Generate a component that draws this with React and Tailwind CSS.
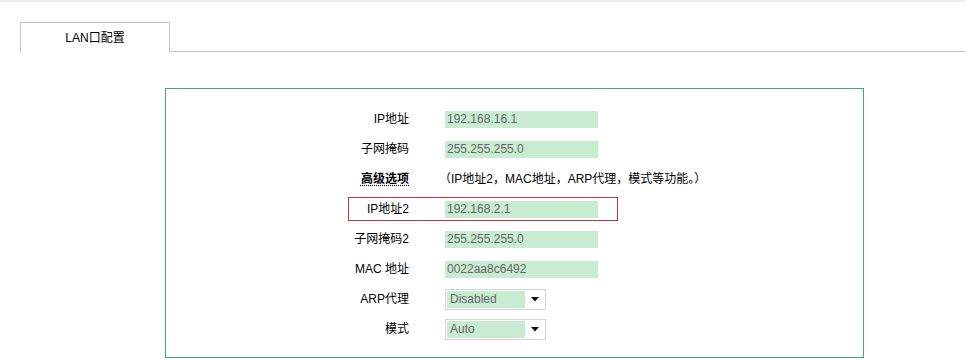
import React from 'react';

const font = { fontFamily: '"Liberation Sans", "Noto Sans CJK SC", sans-serif' };

const rows = [
  { label: 'IP地址', value: '192.168.16.1' },
  { label: '子网掩码', value: '255.255.255.0' },
  { label: '高级选项', note: '（IP地址2，MAC地址，ARP代理，模式等功能。）' },
  { label: 'IP地址2', value: '192.168.2.1', highlight: true },
  { label: '子网掩码2', value: '255.255.255.0' },
  { label: 'MAC 地址', value: '0022aa8c6492' },
  { label: 'ARP代理', select: 'Disabled' },
  { label: '模式', select: 'Auto' },
];

const Field = ({ value }) => (
  <div className="w-[153px] h-[17px] bg-[#c8ecd2] text-[#666] text-[12px] leading-[17px] pl-[2px]">
    {value}
  </div>
);

const Select = ({ value }) => (
  <div className="w-[101px] h-[21px] border border-[#d4d4d4] bg-white flex items-center pl-[1px]">
    <div className="w-[78px] h-[17px] bg-[#c8ecd2] text-[#666] text-[12px] leading-[17px] pl-[3px]">{value}</div>
    <div className="flex-1 flex justify-center">
      <svg width="8" height="5" viewBox="0 0 8 5"><path d="M0 0H8L4 4.5Z" fill="#111" /></svg>
    </div>
  </div>
);

export default function App() {
  return (
    <div className="w-[965px] h-[359px] bg-white overflow-hidden text-black" style={font}>
      <div className="h-[2px] bg-[#f0f0f0]" />
      <div className="flex items-end mt-[20px] pl-[20px]">
        <div className="w-[150px] h-[30px] border border-b-0 border-[#c4c4c4] flex items-center justify-center text-[12px]">
          LAN口配置
        </div>
        <div className="flex-1 border-b border-[#c4c4c4]" />
      </div>
      <div className="ml-[165px] mt-[36px] w-[699px] h-[270px] border border-[#3aa3a3] pt-[15px]">
        {rows.map((r) => (
          <div key={r.label} className="relative flex items-center h-[30px]">
            {r.highlight && (
              <div className="absolute left-[182px] top-[3px] w-[270px] h-[24px] border border-[#c0353a]" />
            )}
            <div
              className={`w-[243px] text-right text-[12px] ${r.note ? 'font-bold underline decoration-dotted underline-offset-2' : ''}`}
            >
              {r.label}
            </div>
            <div className="ml-[36px]">
              {r.value && <Field value={r.value} />}
              {r.select && <Select value={r.select} />}
              {r.note && <div className="-ml-[6px] text-[12px]">{r.note}</div>}
            </div>
          </div>
        ))}
      </div>
    </div>
  );
}
